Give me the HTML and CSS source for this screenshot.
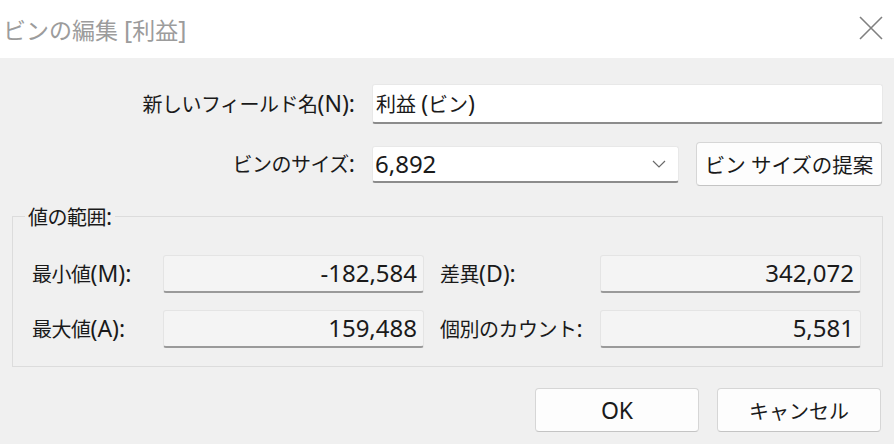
FILE: index.html
```html
<!DOCTYPE html>
<html lang="ja">
<head>
    <meta charset="UTF-8">
    <meta name="viewport" content="width=device-width, initial-scale=1.0">
    <title>ビンの編集</title>
    <link rel="stylesheet" href="styles.css">
</head>
<body>
    <div class="dialog">
        <div class="titlebar">
            <span class="title">ビンの編集 <span class="lat">[</span>利益<span class="lat">]</span></span>
            <svg class="close" width="24" height="24" viewBox="0 0 24 24">
                <path d="M1 1 L23 23 M23 1 L1 23" stroke="#808080" stroke-width="1.6" fill="none"/>
            </svg>
        </div>

        <div class="content">
            <div class="row name-row">
                <label class="row-label">新しいフィールド名<span class="lat">(N):</span></label>
                <div class="textbox">利益 <span class="lat">(</span>ビン<span class="lat">)</span></div>
            </div>

            <div class="row size-row">
                <label class="row-label">ビンのサイズ<span class="lat">:</span></label>
                <div class="combo">
                    <span class="lat">6,892</span>
                    <svg width="14" height="8" viewBox="0 0 14 8">
                        <path d="M1 1 L7 7 L13 1" stroke="#6a6a6a" stroke-width="1.2" fill="none"/>
                    </svg>
                </div>
                <button class="btn suggest">ビン サイズの提案</button>
            </div>

            <div class="group">
                <span class="legend">値の範囲<span class="lat">:</span></span>
                <div class="range-grid">
                    <span class="g-label">最小値<span class="lat">(M):</span></span>
                    <div class="readonly">-182,584</div>
                    <span class="g-label second">差異<span class="lat">(D):</span></span>
                    <div class="readonly">342,072</div>

                    <span class="g-label">最大値<span class="lat">(A):</span></span>
                    <div class="readonly">159,488</div>
                    <span class="g-label second">個別のカウント<span class="lat">:</span></span>
                    <div class="readonly">5,581</div>
                </div>
            </div>

            <div class="actions">
                <button class="btn ok">OK</button>
                <button class="btn">キャンセル</button>
            </div>
        </div>
    </div>
</body>
</html>
```

FILE: styles.css
```css
body {
    margin: 0;
    padding: 0;
    font-family: 'Noto Sans', 'Noto Sans CJK JP', sans-serif;
    background-color: #f0f0f0;
    color: #1a1a1a;
}
.lat {
    font-size: 23px;
    letter-spacing: 0;
}
.dialog {
    width: 894px;
    height: 444px;
    overflow: hidden;
}
.titlebar {
    height: 58px;
    background-color: #ffffff;
    display: flex;
    align-items: center;
    justify-content: space-between;
    padding: 0 11px 0 3px;
    box-sizing: border-box;
}
.title {
    font-size: 23px;
    line-height: 30px;
    color: #9c9c9c;
}
.title .lat {
    font-size: 25px;
}
.close {
    margin-top: -2px;
}
.content {
    padding: 26px 11px 0 0;
}
.row {
    display: flex;
    align-items: center;
}
.row-label {
    width: 355px;
    text-align: right;
    font-size: 20px;
    line-height: 30px;
    padding-right: 17px;
    letter-spacing: -0.5px;
    flex-shrink: 0;
}
.textbox {
    flex: 1;
    height: 40px;
    box-sizing: border-box;
    background-color: #ffffff;
    border: 1px solid #e8e8e8;
    border-bottom: 2px solid #8c8c8c;
    border-radius: 3px;
    font-size: 20px;
    line-height: 36px;
    padding: 0 3px;
}
.size-row {
    margin-top: 18px;
    height: 44px;
}
.combo {
    width: 307px;
    height: 37px;
    box-sizing: border-box;
    background-color: #ffffff;
    border: 1px solid #e8e8e8;
    border-bottom: 2px solid #8c8c8c;
    border-radius: 3px;
    display: flex;
    align-items: center;
    justify-content: space-between;
    padding: 0 12px 0 2px;
}
.combo .lat {
    font-size: 24px;
}
.btn {
    font-family: inherit;
    font-size: 20px;
    color: #1a1a1a;
    background-color: #fdfdfd;
    border: 1px solid #d6d6d6;
    border-bottom-color: #c4c4c4;
    border-radius: 4px;
    height: 44px;
    padding: 0;
}
.btn.ok {
    font-size: 23px;
}
.suggest {
    margin-left: 17px;
    width: 186px;
    font-size: 20.5px;
}
.group {
    position: relative;
    margin: 30px 0 0 12px;
    height: 151px;
    border: 1px solid #dcdcdc;
    box-sizing: border-box;
}
.legend {
    position: absolute;
    top: -15px;
    left: 12px;
    padding: 0 3px;
    font-size: 20px;
    background-color: #f0f0f0;
    letter-spacing: -0.5px;
    line-height: 28px;
}
.range-grid {
    display: grid;
    grid-template-columns: 131px 261px 176px 261px;
    grid-auto-rows: 38px;
    row-gap: 17px;
    align-items: center;
    padding: 38px 0 0 19px;
}
.g-label {
    font-size: 20px;
    line-height: 30px;
    letter-spacing: -0.5px;
}
.g-label.second {
    padding-left: 16px;
}
.readonly {
    height: 38px;
    box-sizing: border-box;
    background-color: #f4f4f4;
    border: 1px solid #e4e4e4;
    border-bottom: 2px solid #9a9a9a;
    border-radius: 3px;
    font-size: 24px;
    text-align: right;
    line-height: 34px;
    padding: 0 6px;
}
.actions {
    display: flex;
    justify-content: flex-end;
    gap: 18px;
    margin-top: 21px;
    padding-right: 2px;
}
.actions .btn {
    width: 164px;
}
```
